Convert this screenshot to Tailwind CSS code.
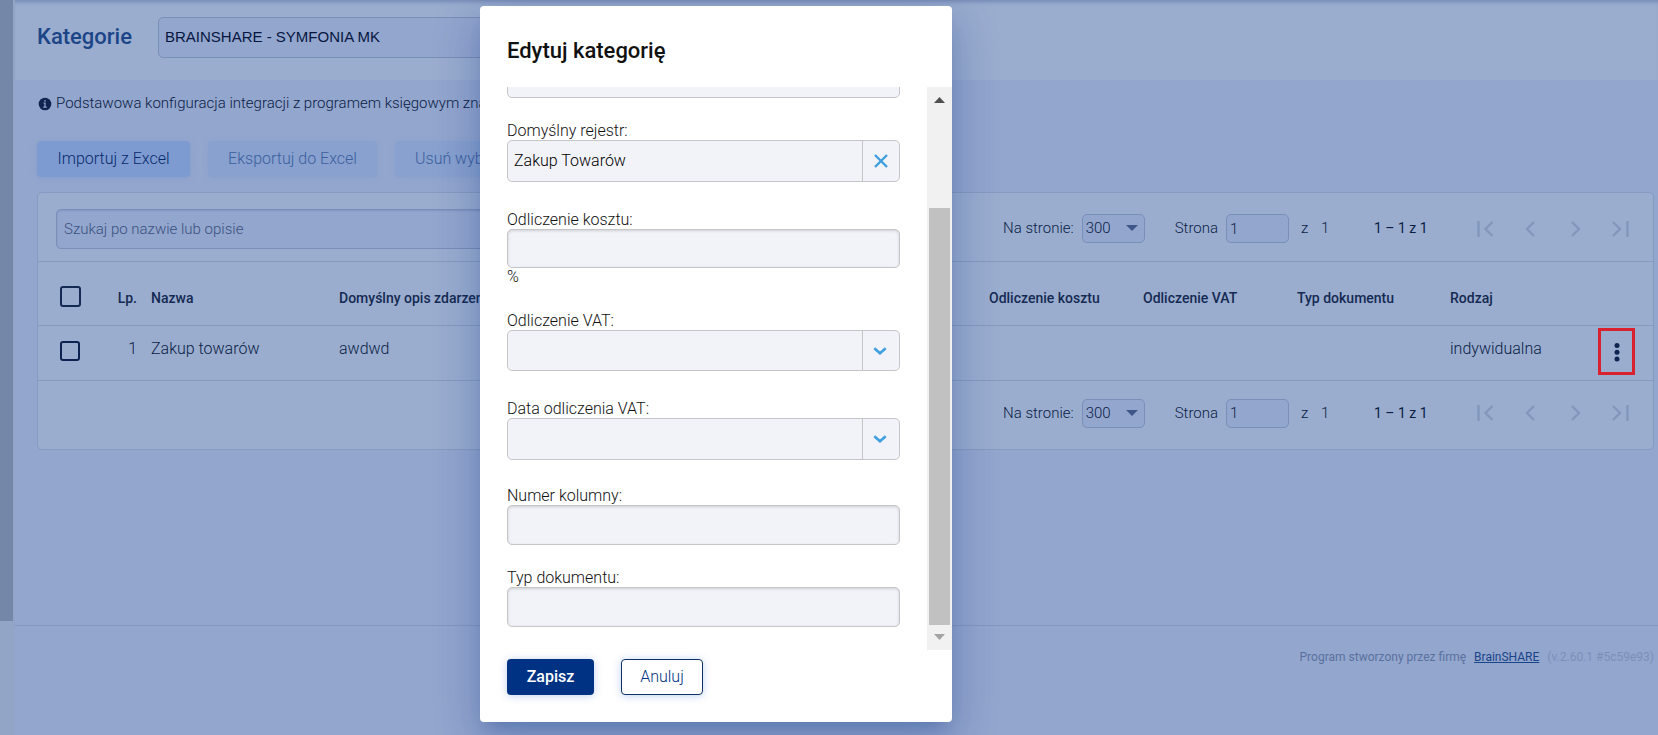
<!DOCTYPE html>
<html lang="pl">
<head>
    <meta charset="UTF-8">
    <meta name="viewport" content="width=device-width, initial-scale=1.0">
    <title>Kategorie - Edytuj kategorię</title>
    <script src="https://cdn.jsdelivr.net/npm/@tailwindcss/browser@4"></script>
</head>
<body class="flex h-screen overflow-hidden bg-[#93a6ce] font-['Roboto',sans-serif] text-[#152a52]">

    <!-- Sidebar scroll strip -->
    <div class="flex w-[15px] shrink-0 flex-col bg-[#92a5c6]">
        <div class="h-[621px] w-[13px] bg-[#7487a9]"></div>
    </div>

    <div class="flex min-w-0 flex-1 flex-col">
        <header class="flex h-20 shrink-0 items-start bg-[#9aadcf] pl-[22px] pt-[17px] shadow-[inset_0_5px_4px_-3px_#7589b4]">
            <h1 class="w-[121px] text-[22px] leading-10 font-medium text-[#1c4587]">Kategorie</h1>
            <select aria-label="Firma" class="h-[41px] w-[400px] appearance-none rounded-[5px] border border-[#7a8fb8] bg-[#93a6ce] px-[6px] text-[15px] text-[#06163f] font-['Liberation_Sans',sans-serif]">
                <option>BRAINSHARE - SYMFONIA MK</option>
            </select>
        </header>

        <main class="h-[545px] shrink-0 pr-1 pl-[22px]">
            <p class="flex h-[61px] items-start gap-1 pt-[13px] text-[15px] leading-5 font-light whitespace-nowrap text-[#0a1d45]">
                <svg class="mt-1 ml-px size-[14px]" viewBox="0 0 14 14"><circle cx="7" cy="7" r="6.300" fill="#0f2450"/><path d="M7 3v1.700M5.600 6.200H7V10M5.300 10.200h3.400" stroke="#93a6ce" stroke-width="1.200" fill="none"/></svg>
                Podstawowa konfiguracja integracji z programem księgowym znajduje się w ustawieniach
            </p>
            <div class="flex gap-[18px] text-[16px] font-light">
                <button class="h-9 w-[153px] rounded-[4px] bg-[#7e9bd1] text-[#062a6c] shadow-[0_1px_6px_#859ecb]">Importuj z Excel</button>
                <button disabled class="h-9 w-[169px] rounded-[4px] bg-[#88a1cf] text-[#3c5f9e] shadow-[0_1px_6px_#8ba2cd]">Eksportuj do Excel</button>
                <button disabled class="h-9 rounded-[4px] bg-[#88a1cf] px-5 text-[#3c5f9e] shadow-[0_1px_6px_#8ba2cd]">Usuń wybrane</button>
            </div>

            <section class="mt-[15px] rounded-[5px] border border-[#869bc1] bg-[#9aadcf]">
                <div class="flex h-[69px] items-center justify-between border-b border-[#869bc1] pt-[3px] pr-[10px] pl-[18px]">
                    <input type="search" aria-label="Szukaj" placeholder="Szukaj po nazwie lub opisie" class="h-10 w-[500px] rounded-[5px] border border-[#7a8fb8] bg-[#93a6ce] px-[7px] text-[15px] font-light shadow-[inset_0_1px_2px_#8195c0] placeholder:text-[#3a5180]">
                    <div class="flex items-center text-[15px] font-light whitespace-nowrap text-[#0a1d45]">
                        <label for="size-top" class="mr-2">Na stronie:</label>
                        <div class="relative mr-[30px]">
                            <select id="size-top" class="block h-[29px] w-[63px] appearance-none rounded-[5px] border border-[#7a8fb8] bg-[#93a6ce] px-[3px]"><option>300</option></select>
                            <svg class="pointer-events-none absolute top-[11px] right-[7px] h-[6px] w-[12px]" viewBox="0 0 12 6"><path d="M0 0h12L6 6z" fill="#3f5688"/></svg>
                        </div>
                        <label for="page-top" class="mr-2">Strona</label>
                        <input id="page-top" type="text" value="1" class="h-[29px] w-[63px] rounded-[5px] border border-[#7a8fb8] bg-[#93a6ce] px-[3px]">
                        <span class="w-8 pl-3">z</span>
                        <span class="w-[53px]">1</span>
                        <span class="w-[89px] text-[14px] font-normal">1 – 1 z 1</span>
                        <button disabled aria-label="Pierwsza" class="flex w-[45px] justify-center"><svg class="size-6" viewBox="0 0 24 24" fill="none" stroke="#8397bd" stroke-width="2.400"><path d="M4.500 4v16M18.500 5l-7 7 7 7"/></svg></button>
                        <button disabled aria-label="Poprzednia" class="flex w-[45px] justify-center"><svg class="size-6" viewBox="0 0 24 24" fill="none" stroke="#8397bd" stroke-width="2.400"><path d="M15 5l-7 7 7 7"/></svg></button>
                        <button disabled aria-label="Następna" class="flex w-[45px] justify-center"><svg class="size-6" viewBox="0 0 24 24" fill="none" stroke="#8397bd" stroke-width="2.400"><path d="M8 5l7 7-7 7"/></svg></button>
                        <button disabled aria-label="Ostatnia" class="flex w-[45px] justify-center"><svg class="size-6" viewBox="0 0 24 24" fill="none" stroke="#8397bd" stroke-width="2.400"><path d="M4 5l7 7-7 7M18.500 4v16"/></svg></button>
                    </div>
                </div>

                <table class="w-full table-fixed text-left">
                    <colgroup>
                        <col class="w-[60px]"><col class="w-[53px]"><col class="w-[188px]"><col>
                        <col class="w-[154px]"><col class="w-[154px]"><col class="w-[153px]"><col class="w-[130px]"><col class="w-[73px]">
                    </colgroup>
                    <thead>
                        <tr class="h-[63px] border-b border-[#869bc1] text-[14px] whitespace-nowrap [&>th]:pt-[10px] [&>th]:font-medium">
                            <th class="pl-[22px]"><input type="checkbox" aria-label="Zaznacz wszystkie" class="mb-1 block size-[21px] appearance-none rounded-[3px] border-2 border-[#152a52]"></th>
                            <th class="pr-[14px] text-right">Lp.</th>
                            <th>Nazwa</th>
                            <th>Domyślny opis zdarzenia</th>
                            <th>Odliczenie kosztu</th>
                            <th>Odliczenie VAT</th>
                            <th>Typ dokumentu</th>
                            <th>Rodzaj</th>
                            <th></th>
                        </tr>
                    </thead>
                    <tbody>
                        <tr class="h-[55px] border-b border-[#869bc1] text-[16px] font-light text-[#0a1d45]">
                            <td class="pb-[3px] pl-[22px]"><input type="checkbox" aria-label="Zaznacz Zakup towarów" class="block size-[20px] appearance-none rounded-[3px] border-2 border-[#0d2250]"></td>
                            <td class="pr-[14px] pb-2 text-right">1</td>
                            <td class="pb-2">Zakup towarów</td>
                            <td class="pb-2">awdwd</td>
                            <td></td>
                            <td></td>
                            <td></td>
                            <td class="pb-2">indywidualna</td>
                            <td class="pb-[2px]">
                                <button aria-label="Akcje" class="ml-[18px] flex h-[47px] w-[37px] items-center justify-center border-3 border-[#d8232f]"><svg class="h-[20px] w-[6px]" viewBox="0 0 6 20" fill="#0f2450"><circle cx="3" cy="3.500" r="2.500"/><circle cx="3" cy="10.300" r="2.500"/><circle cx="3" cy="17" r="2.500"/></svg></button>
                            </td>
                        </tr>
                    </tbody>
                </table>

                <div class="flex h-[68px] items-center justify-end pr-[10px] pb-[3px] text-[15px] font-light whitespace-nowrap text-[#0a1d45]">
                    <label for="size-bottom" class="mr-2">Na stronie:</label>
                    <div class="relative mr-[30px]">
                        <select id="size-bottom" class="block h-[29px] w-[63px] appearance-none rounded-[5px] border border-[#7a8fb8] bg-[#93a6ce] px-[3px]"><option>300</option></select>
                        <svg class="pointer-events-none absolute top-[11px] right-[7px] h-[6px] w-[12px]" viewBox="0 0 12 6"><path d="M0 0h12L6 6z" fill="#3f5688"/></svg>
                    </div>
                    <label for="page-bottom" class="mr-2">Strona</label>
                    <input id="page-bottom" type="text" value="1" class="h-[29px] w-[63px] rounded-[5px] border border-[#7a8fb8] bg-[#93a6ce] px-[3px]">
                    <span class="w-8 pl-3">z</span>
                    <span class="w-[53px]">1</span>
                    <span class="w-[89px] text-[14px] font-normal">1 – 1 z 1</span>
                    <button disabled aria-label="Pierwsza" class="flex w-[45px] justify-center"><svg class="size-6" viewBox="0 0 24 24" fill="none" stroke="#8397bd" stroke-width="2.400"><path d="M4.500 4v16M18.500 5l-7 7 7 7"/></svg></button>
                    <button disabled aria-label="Poprzednia" class="flex w-[45px] justify-center"><svg class="size-6" viewBox="0 0 24 24" fill="none" stroke="#8397bd" stroke-width="2.400"><path d="M15 5l-7 7 7 7"/></svg></button>
                    <button disabled aria-label="Następna" class="flex w-[45px] justify-center"><svg class="size-6" viewBox="0 0 24 24" fill="none" stroke="#8397bd" stroke-width="2.400"><path d="M8 5l7 7-7 7"/></svg></button>
                    <button disabled aria-label="Ostatnia" class="flex w-[45px] justify-center"><svg class="size-6" viewBox="0 0 24 24" fill="none" stroke="#8397bd" stroke-width="2.400"><path d="M4 5l7 7-7 7M18.500 4v16"/></svg></button>
                </div>
            </section>
        </main>

        <footer class="flex flex-1 items-start justify-end gap-2 border-t border-[#8297c2] pt-[21px] pr-1 text-[12px] leading-5 text-[#5a719e]">
            <span>Program stworzony przez firmę</span>
            <a href="#" class="text-[#1a4488] underline">BrainSHARE</a>
            <span class="text-[#7b90b9]">(v.2.60.1 #5c59e93)</span>
        </footer>
    </div>

    <!-- Edit dialog -->
    <div role="dialog" aria-labelledby="dialog-title" class="absolute top-[6px] left-[480px] flex w-[472px] flex-col rounded-[4px] bg-white pb-[27px] text-[#111] shadow-[0_11px_15px_-7px_#00338033,0_24px_38px_3px_#00338024,0_9px_46px_8px_#0033801f]">
        <h2 id="dialog-title" class="h-[81px] pt-7 pl-[27px] text-[22px] leading-[34px] font-medium">Edytuj kategorię</h2>
        <div class="flex h-[563px]">
            <div class="flex flex-1 flex-col justify-end overflow-hidden pr-[27px] pb-[23px] pl-[27px] text-[16px] leading-[18px] font-light">
                <input type="text" aria-label="Opis" class="mb-6 h-10 shrink-0 rounded-[5px] border border-[#c6c6c8] bg-[#f2f3f8]">

                <label for="register">Domyślny rejestr:</label>
                <div class="mb-[29px] flex h-[42px] shrink-0 overflow-hidden rounded-[5px] border border-[#c6c6c8] bg-[#f2f3f8]">
                    <input id="register" type="text" value="Zakup Towarów" class="min-w-0 flex-1 px-[6px] text-black">
                    <button aria-label="Wyczyść" class="flex w-[37px] items-center justify-center border-l border-[#c6c6c8]"><svg class="size-[14px]" viewBox="0 0 14 14"><path d="M1 1l12 12M13 1L1 13" stroke="#3f9fe0" stroke-width="2.400"/></svg></button>
                </div>

                <label for="cost">Odliczenie kosztu:</label>
                <input id="cost" type="text" class="h-[39px] shrink-0 rounded-[5px] border border-[#c6c6c8] bg-[#f2f3f8] px-[6px] shadow-[inset_0_1px_3px_#00000026]">
                <span class="mb-[26px]">%</span>

                <label for="vat">Odliczenie VAT:</label>
                <div class="mb-[29px] flex h-[41px] shrink-0 overflow-hidden rounded-[5px] border border-[#c6c6c8] bg-[#f2f3f8]">
                    <input id="vat" type="text" class="min-w-0 flex-1 px-[6px]">
                    <button aria-label="Rozwiń" class="flex w-[37px] items-center justify-center border-l border-[#c6c6c8]"><svg class="mr-[2px] h-[8px] w-[14px]" viewBox="0 0 14 8"><path d="M1.300 1.300L7 6.300l5.700-5" fill="none" stroke="#3f9fe0" stroke-width="2.600"/></svg></button>
                </div>

                <label for="vat-date">Data odliczenia VAT:</label>
                <div class="mb-[27px] flex h-[42px] shrink-0 overflow-hidden rounded-[5px] border border-[#c6c6c8] bg-[#f2f3f8]">
                    <input id="vat-date" type="text" class="min-w-0 flex-1 px-[6px]">
                    <button aria-label="Rozwiń" class="flex w-[37px] items-center justify-center border-l border-[#c6c6c8]"><svg class="mr-[2px] h-[8px] w-[14px]" viewBox="0 0 14 8"><path d="M1.300 1.300L7 6.300l5.700-5" fill="none" stroke="#3f9fe0" stroke-width="2.600"/></svg></button>
                </div>

                <label for="column">Numer kolumny:</label>
                <input id="column" type="text" class="mb-6 h-10 shrink-0 rounded-[5px] border border-[#c6c6c8] bg-[#f2f3f8] px-[6px] shadow-[inset_0_1px_3px_#00000026]">

                <label for="doc-type">Typ dokumentu:</label>
                <input id="doc-type" type="text" class="h-10 shrink-0 rounded-[5px] border border-[#c6c6c8] bg-[#f2f3f8] px-[6px] shadow-[inset_0_1px_3px_#00000026]">
            </div>
            <!-- Scrollbar -->
            <div class="flex w-[25px] flex-col items-center bg-[#f1f1f1]">
                <svg class="mt-[10px] h-[6px] w-[11px]" viewBox="0 0 11 6"><path d="M0 6h11L5.500 0z" fill="#505050"/></svg>
                <div class="mt-[105px] mb-[9px] w-[21px] flex-1 bg-[#c1c1c1]"></div>
                <svg class="mb-[10px] h-[6px] w-[11px]" viewBox="0 0 11 6"><path d="M0 0h11L5.500 6z" fill="#a3a3a3"/></svg>
            </div>
        </div>
        <div class="mt-[9px] flex gap-[27px] pl-[27px]">
            <button class="h-9 w-[87px] rounded-[4px] bg-[#003283] text-[16px] font-medium text-white shadow-[0_1px_8px_#0050c840]">Zapisz</button>
            <button class="h-9 w-[82px] rounded-[4px] border border-[#0f3268] bg-white text-[16px] font-light text-[#003283] shadow-[0_1px_8px_#0050c840]">Anuluj</button>
        </div>
    </div>

</body>
</html>
